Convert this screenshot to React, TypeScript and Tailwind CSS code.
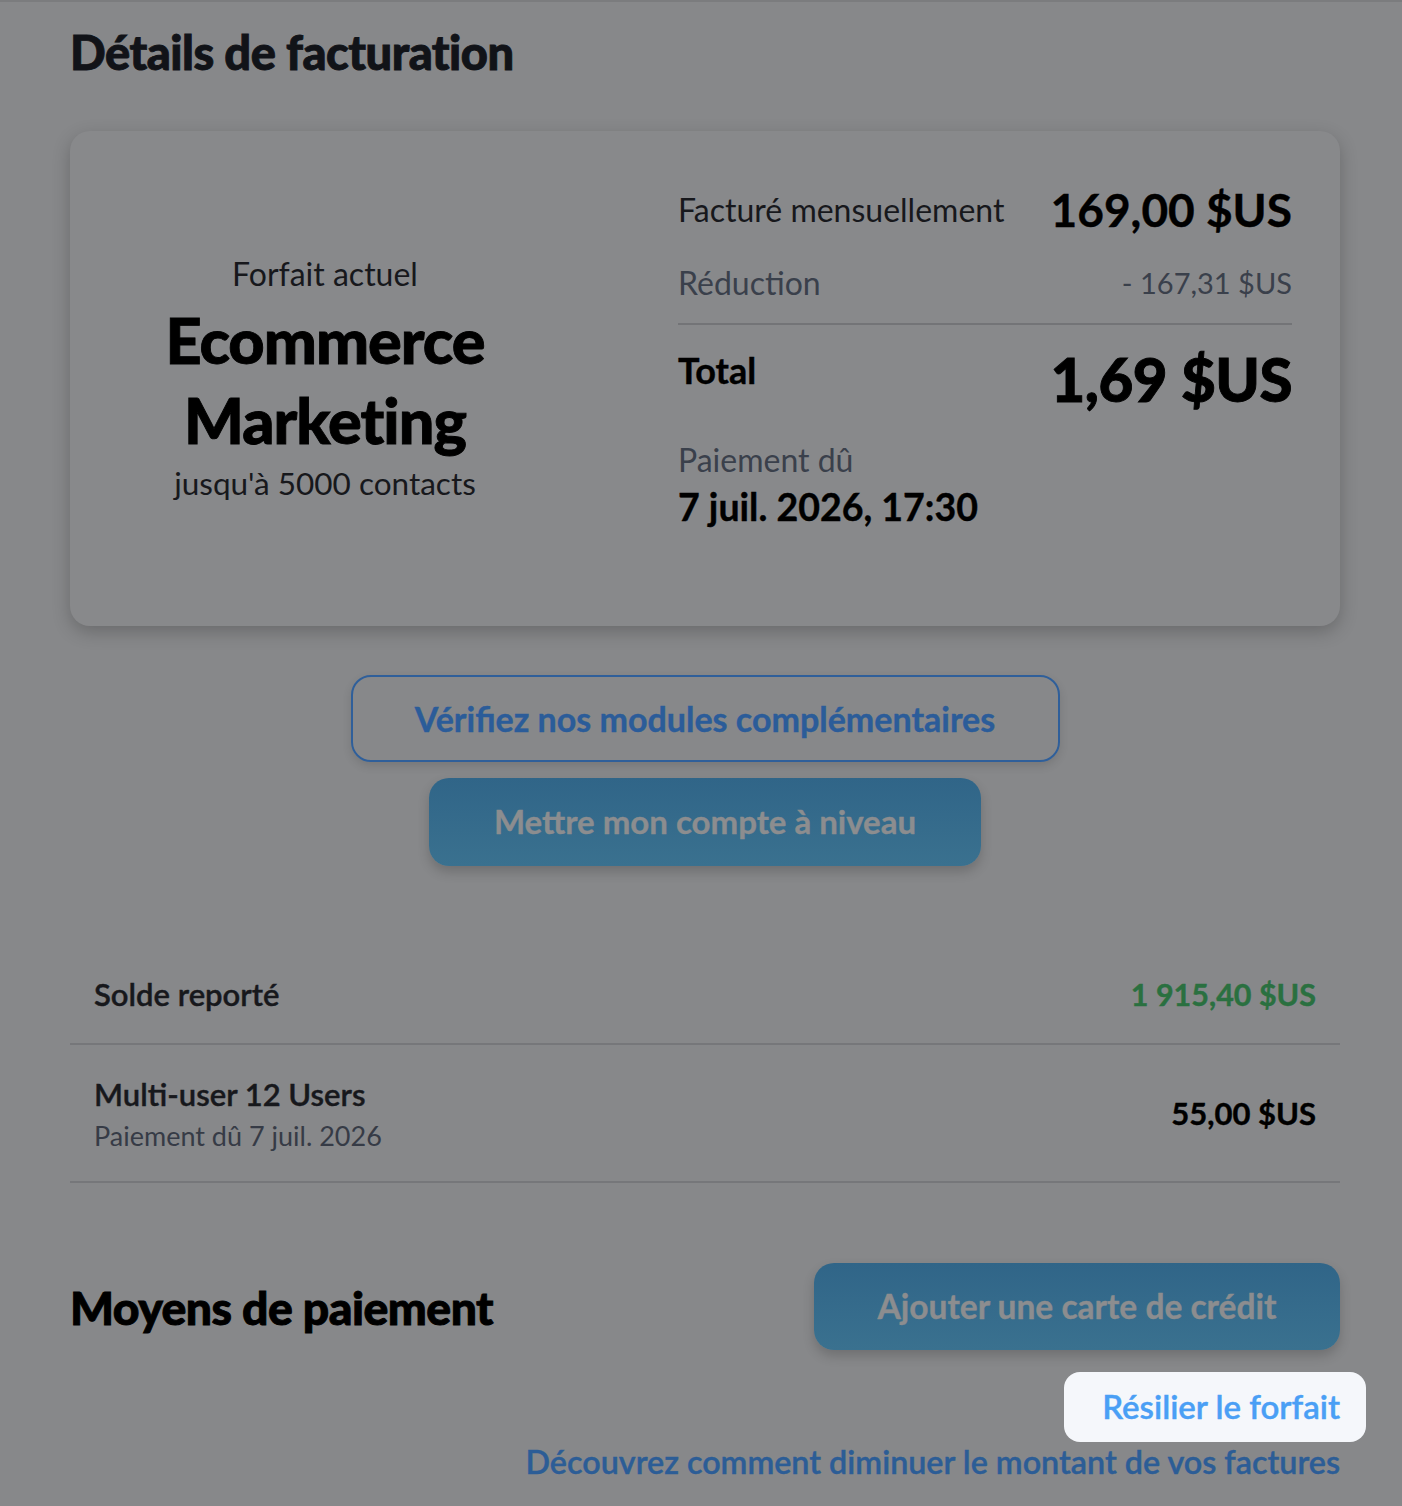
import React from "react";

const font = { fontFamily: "Lato, 'Noto Sans', sans-serif" };

const heavy = "[-webkit-text-stroke:0.9px_currentColor]";
const semi = "[-webkit-text-stroke:0.4px_currentColor]";

function Row({
  title,
  sub,
  amount,
  amountClass,
}: {
  title: string;
  sub?: string;
  amount: string;
  amountClass: string;
}) {
  return (
    <div className="flex items-center justify-between border-b-2 border-[#76777a] px-6 py-[29px]">
      <div className="flex flex-col">
        <span className={`text-[31px] font-semibold leading-[40px] text-[#17181c] ${semi}`}>{title}</span>
        {sub && <span className="mt-[6px] text-[27px] leading-[32px] text-[#363b46]">{sub}</span>}
      </div>
      <span className={amountClass}>{amount}</span>
    </div>
  );
}

export default function App() {
  return (
    <div
      className="min-h-[1506px] w-full overflow-hidden border-t-2 border-[#7b7c7e] bg-[#87888a]"
      style={font}
    >
      <div className="flex flex-col pl-[70px] pr-[62px] pt-[20px] pb-10">
        {/* Billing details */}
        <h1 className={`text-[47px] font-black leading-[60px] tracking-[-0.5px] text-[#111318] ${heavy}`}>
          Détails de facturation
        </h1>

        <div className="mt-[49px] grid grid-cols-[414px_1fr] gap-[146px] rounded-[20px] bg-[#88898b] pl-12 pr-12 pt-[55px] pb-[97px] shadow-[0_6px_18px_rgba(0,0,0,0.22)]">
          <div className="flex flex-col items-center self-start pt-[68px] text-center">
            <span className="text-[32px] leading-[40px] text-[#17181c]">Forfait actuel</span>
            <span className={`mt-[6px] text-[63px] font-black leading-[80px] tracking-[-1px] text-black ${heavy}`}>
              Ecommerce
              <br />
              Marketing
            </span>
            <span className="mt-[3px] text-[31.5px] leading-[40px] text-[#17181c]">jusqu'à 5000 contacts</span>
          </div>

          <div className="flex flex-col">
            <div className="flex h-[48px] items-center justify-between">
              <span className="text-[32px] leading-[40px] text-[#17181c]">Facturé mensuellement</span>
              <span className={`text-[46px] font-bold leading-[48px] text-black ${semi}`}>169,00 $US</span>
            </div>
            <div className="mt-[29px] flex items-center justify-between text-[32px] leading-[40px] text-[#3a404b]">
              <span>Réduction</span>
              <span className="text-[29px]">- 167,31 $US</span>
            </div>
            <div className="mt-[20px] h-[2px] bg-[#737477]" />
            <div className="mt-[22px] flex items-start justify-between">
              <span className={`mt-[3px] text-[36px] font-bold leading-[40px] text-black ${semi}`}>Total</span>
              <span className={`text-[60px] font-black leading-[64px] tracking-[-0.5px] text-black ${heavy}`}>
                1,69 $US
              </span>
            </div>
            <span className="mt-[29px] text-[32px] leading-[40px] text-[#3a404b]">Paiement dû</span>
            <span className={`mt-[5px] text-[37.5px] font-bold leading-[44px] text-black ${semi}`}>
              7 juil. 2026, 17:30
            </span>
          </div>
        </div>

        {/* Actions */}
        <div className="mt-[49px] flex flex-col items-center gap-[16px]">
          <button
            className={`h-[87px] w-[709px] rounded-[20px] border-2 border-[#2f5f9a] text-[34px] font-bold text-[#2b5c99] shadow-[0_4px_10px_rgba(0,0,0,0.12)] ${semi}`}
          >
            Vérifiez nos modules complémentaires
          </button>
          <button
            className={`h-[88px] w-[552px] rounded-[20px] bg-gradient-to-b from-[#306588] to-[#3a718f] text-[33px] font-bold text-[#8c8d8f] shadow-[0_6px_12px_rgba(0,0,0,0.18)] ${semi}`}
          >
            Mettre mon compte à niveau
          </button>
        </div>

        {/* Balance rows */}
        <div className="mt-[79px] flex flex-col">
          <Row
            title="Solde reporté"
            amount="1 915,40 $US"
            amountClass={`text-[30.5px] font-bold leading-[40px] text-[#2a7040] ${semi}`}
          />
          <Row
            title="Multi-user 12 Users"
            sub="Paiement dû 7 juil. 2026"
            amount="55,00 $US"
            amountClass={`text-[31px] font-bold leading-[40px] text-black ${semi}`}
          />
        </div>

        {/* Payment methods */}
        <div className="mt-[80px] flex items-center justify-between">
          <h2 className={`text-[46.3px] font-black leading-[60px] tracking-[-0.5px] text-black ${heavy}`}>
            Moyens de paiement
          </h2>
          <button
            className={`h-[87px] w-[526px] rounded-[20px] bg-gradient-to-b from-[#306588] to-[#3a718f] text-[33.5px] font-bold text-[#8c8d8f] shadow-[0_6px_12px_rgba(0,0,0,0.18)] ${semi}`}
          >
            Ajouter une carte de crédit
          </button>
        </div>

        <div className="mt-[22px] flex flex-col items-end">
          <button
            className={`relative -mr-[26px] h-[70px] rounded-[16px] bg-[#f5f7fb] pl-[38px] pr-[26px] text-[33px] font-semibold text-[#4a9ff5] ${semi}`}
          >
            Résilier le forfait
          </button>
          <a className={`text-[32.3px] font-semibold leading-[40px] text-[#2c5d96] ${semi}`}>
            Découvrez comment diminuer le montant de vos factures
          </a>
        </div>
      </div>
    </div>
  );
}
